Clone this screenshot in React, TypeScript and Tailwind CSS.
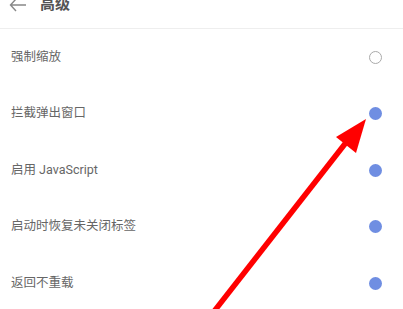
import React from "react";

const rows: { label: string; on: boolean }[] = [
  { label: "强制缩放", on: false },
  { label: "拦截弹出窗口", on: true },
  { label: "启用 JavaScript", on: true },
  { label: "启动时恢复未关闭标签", on: true },
  { label: "返回不重载", on: true },
];

export default function App() {
  return (
    <div
      className="relative w-[403px] h-[309px] overflow-hidden bg-white"
      style={{ fontFamily: '"Roboto", "Noto Sans CJK SC", sans-serif' }}
    >
      {/* header, cropped at the top */}
      <header className="h-[29px] border-b border-[#eeeeee] flex items-start">
        <div className="-mt-[7px] flex items-center">
          <svg width="18" height="14" viewBox="0 0 18 14" className="ml-[9px] mt-[1px]">
            <path d="M7 1 L1.5 7 L7 13 M1.5 7 H17" fill="none" stroke="#888" strokeWidth="1.4" />
          </svg>
          <span className="ml-[13px] text-[15px] font-bold text-[#555]">高级</span>
        </div>
      </header>

      {/* settings list */}
      <div className="flex flex-col">
        {rows.map((r, i) => (
          <div key={i} className="h-[56.5px] flex items-center justify-between pl-[11px] pr-[21px]">
            <span className="text-[12.5px] text-[#666]">{r.label}</span>
            {r.on ? (
              <span className="w-[13px] h-[13px] rounded-full bg-[#6f8ee2]" />
            ) : (
              <span className="w-[13px] h-[13px] rounded-full border-[1.5px] border-[#aaaaaa]" />
            )}
          </div>
        ))}
      </div>

      {/* red annotation arrow */}
      <svg className="absolute left-0 top-0" width="403" height="309" viewBox="0 0 403 309">
        <line x1="212" y1="314" x2="348" y2="140" stroke="#ff0000" strokeWidth="5.5" />
        <polygon points="366,119 336,137 356,153" fill="#ff0000" />
      </svg>
    </div>
  );
}
